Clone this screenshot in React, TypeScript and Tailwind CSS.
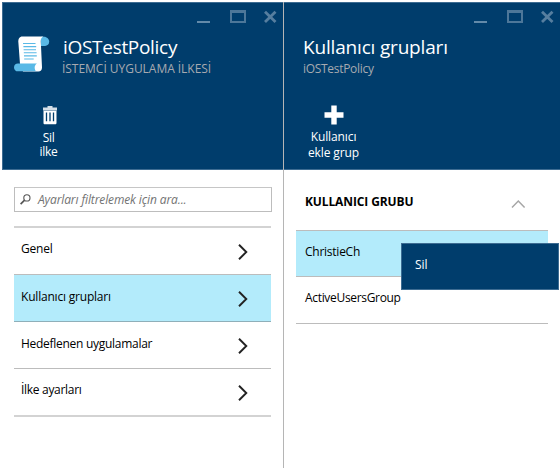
import React from "react";

function WindowControls() {
  return (
    <svg width="82" height="16" viewBox="0 0 82 16" fill="none" className="block" aria-hidden="true">
      <path d="M0 14h13" stroke="#638AA9" strokeWidth="2" />
      <path d="M33 2h16v13H33z M35 5v8h12V5z" fill="#4D7799" fillRule="evenodd" />
      <path d="M68 3.8 78.5 14 M78.5 3.8 68 14" stroke="#567E9F" strokeWidth="2.8" />
    </svg>
  );
}

function ScrollIcon() {
  return (
    <svg width="36" height="36" viewBox="0 0 36 36" className="block" aria-hidden="true">
      <path d="M27 0.7h3c3 0 5.2 2.6 5.2 5 0 2.4-1.8 4-4.1 4.2H27z" fill="#59B9E6" />
      <path d="M8.5 0.5h21c-2 .8-2.8 2.3-2.7 5l1.2 26c0 2.5-1.4 4.1-3.6 4.1H9L6 28 4.4 6.8C4 2.8 5.4.5 8.5.5z" fill="#fff" />
      <path d="M4 27.5h19c-2.3 1.3-3.2 4.4-1.2 7.8H4c-2.4 0-4-1.5-4-3.9s1.6-3.9 4-3.9z" fill="#59B9E6" />
      <path d="M9 7.5h12.5M9.4 10.6h12.8M9.6 13.7H22M9.8 16.8h12.8M10 19.9h12.8M10.2 23h9.5" stroke="#59B9E6" strokeWidth="1.1" />
    </svg>
  );
}

function TrashIcon() {
  return (
    <svg width="16" height="20" viewBox="0 0 16 20" className="block" aria-hidden="true">
      <path d="M5.5 1h5v1.5h4.5V5.4H1V2.5h4.5z" fill="#D5DFE8" />
      <path d="M1.5 5.8h13v12.1c0 .8-.6 1.3-1.3 1.3H2.8c-.8 0-1.3-.5-1.3-1.3z" fill="#fff" />
      <path d="M4.5 7.5v8.8M8 7.5v8.8M11.5 7.5v8.8" stroke="#003D6C" strokeWidth="1.3" />
    </svg>
  );
}

function Chevron() {
  return (
    <svg width="12" height="18" viewBox="0 0 12 18" fill="none" className="block" aria-hidden="true">
      <path d="M2 1.8 9.3 9 2 16.2" stroke="#222" strokeWidth="1.9" />
    </svg>
  );
}

function MenuRow({ label, top, tracking, className }: { label: string; top: string; tracking: string; className: string }) {
  return (
    <div className={`flex justify-between border-b pl-[7px] pr-[22px] ${className}`}>
      <span className={`${top} ${tracking} leading-4`}>{label}</span>
      <div className="pt-[14.5px]"><Chevron /></div>
    </div>
  );
}

export default function App() {
  return (
    <div className="flex h-[468px] w-[560px] overflow-hidden whitespace-nowrap bg-white pt-[2px] pl-[2px] font-['Open_Sans','Noto_Sans',sans-serif] text-[12px] text-black">
      <section className="w-[281px] shrink-0">
        <header className="h-[168px] border-t border-b border-l border-[#3D6C92] bg-[#003D6C] text-white">
          <div className="flex h-[31px] justify-end pt-[5px] pr-[4px]"><WindowControls /></div>
          <div className="flex pl-[11px]">
            <div className="pt-[2px]"><ScrollIcon /></div>
            <div className="pl-[12px]">
              <h1 className="pl-[1px] text-[19px] leading-[26px] tracking-[-0.3px]">iOSTestPolicy</h1>
              <p className="text-[12px] leading-[18px] tracking-[-0.03px] text-[#A7AAB0]">İSTEMCİ UYGULAMA İLKESİ</p>
            </div>
          </div>
          <div className="mt-[27px] ml-[27px] flex w-[40px] flex-col items-center tracking-[-0.3px]">
            <TrashIcon />
            <div className="mt-[6px] mr-[3px] flex flex-col items-center">
              <span className="h-[14px] leading-[14px]">Sil</span>
              <span className="leading-[14px]">ilke</span>
            </div>
          </div>
        </header>
        <div className="px-[12px] pt-[17px]">
          <div className="flex h-[25px] w-[258px] items-center border border-t-[#C6C6C6] border-[#BDBDBD] pl-[5px] text-[#737373]">
            <svg width="11" height="11" viewBox="0 0 11 11" fill="none" aria-hidden="true">
              <circle cx="6.9" cy="3.9" r="3.1" stroke="#555" strokeWidth="1.1" />
              <path d="M4.6 6.2.6 10.1" stroke="#555" strokeWidth="1.7" />
            </svg>
            <span className="ml-[7px] italic tracking-[-0.12px]">Ayarları filtrelemek için ara...</span>
          </div>
          <nav className="mt-[14px] w-[257px] border-t-2 border-[#D3D3D3]">
            <MenuRow label="Genel" top="pt-[13px]" tracking="tracking-[-0.2px]" className="h-[47px] border-[#BCBCBC]" />
            <MenuRow label="Kullanıcı grupları" top="pt-[14px]" tracking="tracking-[-0.2px]" className="h-[47px] border-[#8FAFB9] bg-[#B3EBFB]" />
            <MenuRow label="Hedeflenen uygulamalar" top="pt-[14px]" tracking="tracking-[-0.28px]" className="h-[47px] border-[#BCBCBC]" />
            <MenuRow label="İlke ayarları" top="pt-[13px]" tracking="tracking-[-0.3px]" className="h-[48px] border-b-2 border-[#D3D3D3]" />
          </nav>
        </div>
      </section>
      <section className="flex-1 border-l border-[#B5B5B5]">
        <header className="h-[168px] border-t border-b border-[#3D6C92] bg-[#003D6C] text-white">
          <div className="flex h-[31px] justify-end pt-[5px] pr-[4px]"><WindowControls /></div>
          <div className="pl-[19px]">
            <h2 className="text-[19px] leading-[26px] tracking-[-0.18px]">Kullanıcı grupları</h2>
            <p className="text-[12px] leading-[18px] tracking-[-0.3px] text-[#A7AAB0]">iOSTestPolicy</p>
          </div>
          <div className="mt-[27px] ml-[19px] flex w-[62px] flex-col items-center text-center leading-4 tracking-[-0.1px]">
            <svg width="20" height="20" viewBox="0 0 20 20" className="block" aria-hidden="true">
              <path d="M7.3.5h5.4v6.8h6.8v5.4h-6.8v6.8H7.3v-6.8H.5V7.3h6.8z" fill="#fff" />
            </svg>
            <span className="mt-[4px] mr-[1px]">Kullanıcı<br />ekle grup</span>
          </div>
        </header>
        <div className="pl-[12px]">
          <div className="flex h-[60px] w-[253px] justify-between pt-[24px] pr-[23px] pl-[9px]">
            <h3 className="leading-4 font-bold tracking-[-0.12px]">KULLANICI GRUBU</h3>
            <svg width="15" height="10" viewBox="0 0 15 10" fill="none" className="mt-[5px]" aria-hidden="true">
              <path d="M1 8.5 7.3 2l6.3 6.5" stroke="#A6A6A6" strokeWidth="1.5" />
            </svg>
          </div>
          <div className="relative w-[252px]">
            <div className="h-[47px] border-t border-b border-[#BCBCBC] bg-[#B3EBFB] pt-[13px] pl-[9px] leading-4 tracking-[-0.25px]">ChristieCh</div>
            <div className="h-[47px] border-b border-[#BCBCBC] pt-[13px] pl-[9px] leading-4 tracking-[-0.32px]">ActiveUsersGroup</div>
            <div className="absolute top-[13px] left-[105px] h-[47px] w-[158px] border border-[#3D6C92] bg-[#003D6C] pt-[13px] pl-[13px] leading-4 text-white tracking-[-0.1px]">Sil</div>
          </div>
        </div>
      </section>
    </div>
  );
}
